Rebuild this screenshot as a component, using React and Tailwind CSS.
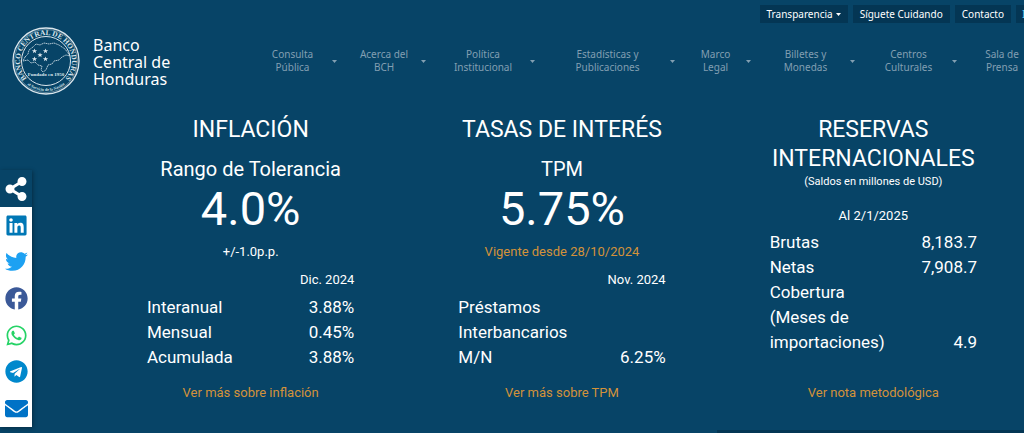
import { FaEnvelope, FaFacebook, FaLinkedin, FaShareAlt, FaTelegram, FaTwitter, FaWhatsapp } from "react-icons/fa";

const topLinks = [
  { label: "Transparencia", caret: true },
  { label: "Síguete Cuidando" },
  { label: "Contacto" }
];

const menu = [
  ["Consulta", "Pública"],
  ["Acerca del", "BCH"],
  ["Política", "Institucional"],
  ["Estadísticas y", "Publicaciones"],
  ["Marco", "Legal"],
  ["Billetes y", "Monedas"],
  ["Centros", "Culturales"],
  ["Sala de", "Prensa"]
];

const social = [
  { name: "LinkedIn", icon: FaLinkedin, color: "text-[#0077b5]" },
  { name: "Twitter", icon: FaTwitter, color: "text-[#1da1f2]" },
  { name: "Facebook", icon: FaFacebook, color: "text-[#3b5998]" },
  { name: "WhatsApp", icon: FaWhatsapp, color: "text-[#25d366]" },
  { name: "Telegram", icon: FaTelegram, color: "text-[#0088cc]" },
  { name: "Correo", icon: FaEnvelope, color: "text-[#0072c6]" }
];

const inflacion = [["Interanual", "3.88%"], ["Mensual", "0.45%"], ["Acumulada", "3.88%"]];
const tasas = [["Préstamos Interbancarios M/N", "6.25%"]];
const reservas = [["Brutas", "8,183.7"], ["Netas", "7,908.7"], ["Cobertura (Meses de importaciones)", "4.9"]];

export default function App() {
  return (
    <div className="relative flex min-h-screen flex-col overflow-hidden bg-[#074467] font-[Roboto,sans-serif] text-white">
      <Header />
      <main className="-mr-[5px] grid grow grid-cols-3 content-start pt-[15px] pl-[95px]">
        <Card title="INFLACIÓN" link="Ver más sobre inflación">
          <Rate label="Rango de Tolerancia" value="4.0%" />
          <p className="mt-1 text-center text-[13px] leading-[21px]">+/-1.0p.p.</p>
          <DataTable head="Dic. 2024" rows={inflacion} />
        </Card>
        <Card title="TASAS DE INTERÉS" link="Ver más sobre TPM">
          <Rate label="TPM" value="5.75%" />
          <p className="mt-1 text-center text-[13px] leading-[21px] text-[#d3923a]">Vigente desde 28/10/2024</p>
          <DataTable head="Nov. 2024" rows={tasas} />
        </Card>
        <Card title="RESERVAS INTERNACIONALES" link="Ver nota metodológica">
          <p className="text-center text-[11px] leading-[18px]">(Saldos en millones de USD)</p>
          <p className="mt-[14px] text-center text-[13px] leading-[21px]">Al 2/1/2025</p>
          <DataTable rows={reservas} />
        </Card>
      </main>
      <div className="h-[3px] w-[30%] self-end bg-[#043654]" />
      <Share />
    </div>
  );
}

function Header() {
  return (
    <header className="flex h-[100px] font-['Noto_Sans',sans-serif]">
      <a href="#inicio" className="flex shrink-0 items-start pt-[26px] pl-[11px]">
        <Seal />
        <span className="mt-[11px] ml-3 w-[84px] text-base leading-[17px]">Banco Central de Honduras</span>
      </a>
      <div className="flex min-w-0 grow flex-col">
        <div className="flex justify-end gap-[5px] pt-[5px]">
          {topLinks.map((item) => (
            <a key={item.label} href="#enlace" className="flex h-[18px] items-center gap-[3px] bg-[#043654] px-[7px] text-[10px] whitespace-nowrap">
              {item.label}
              {item.caret && <Caret />}
            </a>
          ))}
          <a href="#enlace" className="h-[18px] w-[8px] shrink-0 overflow-hidden bg-[#043654] pl-[6px] text-[10px] leading-[18px] text-[#5cc3e8]">I</a>
        </div>
        <nav className="-mr-[13px] ml-[66px] grid grid-cols-[94fr_89fr_109fr_140fr_76fr_104fr_102fr_80fr] pt-[25px] text-[#829fb2]">
          {menu.map(([first, second], i) => (
            <a key={first} href="#menu" className="flex items-center pl-[10px] text-center text-[10px] leading-[13px] whitespace-nowrap">
              <span className="grow">{first}<br />{second}</span>
              {i < menu.length - 1 && <Caret />}
            </a>
          ))}
        </nav>
      </div>
    </header>
  );
}

function Caret() {
  return <svg viewBox="0 0 5 3" className="h-[3px] w-[5px] shrink-0" fill="currentColor"><path d="M0 0h5L2.500 3z" /></svg>;
}

function Card({ title, link, children }) {
  return (
    <section className="flex flex-col px-[52px]">
      <h2 className="text-center text-[23px] leading-[29px]">{title}</h2>
      {children}
      <a href="#detalle" className="mt-auto pt-3 text-center text-[13px] leading-[21px] text-[#d3923a]">{link}</a>
    </section>
  );
}

function Rate({ label, value }) {
  return (
    <>
      <h3 className="mt-[13px] text-center text-xl leading-6">{label}</h3>
      <p className="text-center text-[47px] leading-[56px]">{value}</p>
    </>
  );
}

function DataTable({ head, rows }) {
  return (
    <table className="mt-1 w-full text-[17px] leading-[25px]">
      {head && (
        <thead>
          <tr><td /><th scope="col" className="h-[29px] pb-[2px] text-right text-[13px] font-normal">{head}</th></tr>
        </thead>
      )}
      <tbody>
        {rows.map(([name, value]) => (
          <tr key={name}>
            <th scope="row" className="w-[120px] text-left font-normal">{name}</th>
            <td className="text-right align-bottom">{value}</td>
          </tr>
        ))}
      </tbody>
    </table>
  );
}

function Share() {
  return (
    <aside className="absolute top-[170px] left-0 w-8 shadow-[1px_1px_4px_rgba(0,0,0,0.35)]">
      <button type="button" aria-label="Compartir" className="flex h-[37px] w-full items-center justify-center"><FaShareAlt size={24} /></button>
      <div className="grid h-[220px] grid-rows-6 bg-white">
        {social.map(({ name, icon: Icon, color }) => (
          <a key={name} href="#compartir" aria-label={name} className={`flex items-center justify-center ${color}`}><Icon size={23} /></a>
        ))}
      </div>
    </aside>
  );
}

function Seal() {
  const star = "M0-2.600.7-.8 2.600-.8 1.100.4 1.600 2.200 0 1.100-1.600 2.200-1.100.4-2.600-.8-.7-.8z";
  return (
    <svg viewBox="0 0 70 70" className="size-[70px]" fill="none" stroke="#dbe6ec">
      <circle cx="35" cy="35" r="33" strokeWidth="1.300" />
      <circle cx="35" cy="35" r="31.500" strokeWidth=".4" />
      <circle cx="35" cy="35" r="24.500" strokeWidth="1" />
      <path id="ring-top" d="M18 54.600A25.950 25.950 0 1 1 52 54.600" stroke="none" />
      <path id="ring-bottom" d="M16 58.300A30 30 0 0 0 54 58.300" stroke="none" />
      <g fill="#dbe6ec" stroke="none" fontFamily="Liberation Serif, serif" fontWeight="bold" textAnchor="middle">
        <text fontSize="7.300"><textPath href="#ring-top" startOffset="50%">BANCO CENTRAL DE HONDURAS</textPath></text>
        <text fontSize="4"><textPath href="#ring-bottom" startOffset="50%">al Servicio de la Nación</textPath></text>
        <text x="35" y="50" fontSize="5">Fundado en 1950</text>
        <path transform="translate(29 29)" d={star} />
        <path transform="translate(23.500 25)" d={star} />
        <path transform="translate(34.500 25)" d={star} />
        <path transform="translate(23.500 33)" d={star} />
        <path transform="translate(34.500 33)" d={star} />
      </g>
      <path strokeWidth=".8" strokeDasharray="1.500 .5" d="M14 31l3-3 1-4 4-3 3-3 4 1 4-2 5 1 5-1 5 2 3 2 3 2 3 4 2 3-4-1-4 2-3 3-5 1-2 3-4 1-2 5-3 2-2-2 1-4-4-1-3-3-4 1-3-3-5 1z" />
    </svg>
  );
}
